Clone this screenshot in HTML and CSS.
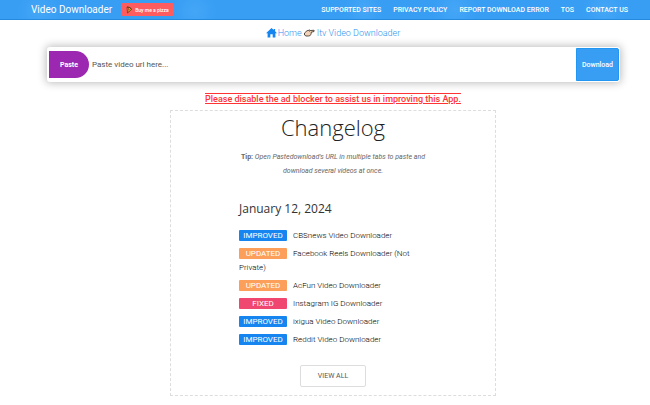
FILE: index.html
```html
<!DOCTYPE html>
<html lang="en">
<head>
<meta charset="utf-8">
<meta name="viewport" content="width=device-width, initial-scale=1">
<title>Itv Video Downloader</title>
<link rel="stylesheet" href="styles.css">
</head>
<body>
<header class="topbar">
  <a class="brand" href="#">Video Downloader</a>
  <a class="pizza" href="#">
    <svg class="pizza-icon" viewBox="0 0 12 14" aria-hidden="true">
      <path d="M2 1 Q10 1 11 6 L3 13 Z" fill="#e8a52c" stroke="#5d351d" stroke-width="1.5"/>
      <path d="M2 1 Q10 1 11 6" fill="none" stroke="#6b3b1c" stroke-width="2"/>
      <circle cx="5" cy="5" r="1.3" fill="#a92c1b"/>
      <circle cx="7.500" cy="6.500" r="1" fill="#4f7a2a"/>
      <circle cx="4.500" cy="9" r="1" fill="#a92c1b"/>
    </svg>
    <span>Buy me a pizza</span>
  </a>
  <nav class="menu">
    <a href="#">SUPPORTED SITES</a>
    <a href="#">PRIVACY POLICY</a>
    <a href="#">REPORT DOWNLOAD ERROR</a>
    <a href="#">TOS</a>
    <a href="#">CONTACT US</a>
  </nav>
</header>
<main class="page">
  <nav class="crumbs">
    <a class="home" href="#">
      <svg class="home-icon" viewBox="0 0 12 11" aria-hidden="true">
        <path d="M6 0 L8.500 2.300 V1 H10 V3.700 L12 5.800 H10.300 V10.500 H7.300 V7 H4.700 V10.500 H1.700 V5.800 H0 Z" fill="#1785f0"/>
      </svg>
      <span>Home</span>
    </a>
    <svg class="hand-icon" viewBox="0 0 22 16" aria-hidden="true">
      <path d="M1 8 L6 3.500 L10 2.500 Q12 1 13 3 L20 2.500 Q22 4 20 5 L14 6.500 Q16 8 14 9.500 Q15 11 12.500 12 Q12 14 9 14 L4 14 L1 12 Z" fill="#f3d3b8" stroke="#2e2925" stroke-width="1.600" stroke-linejoin="round"/>
      <path d="M13 3 L10 5" fill="none" stroke="#2e2925" stroke-width="1.200"/>
    </svg>
    <a href="#">Itv Video Downloader</a>
  </nav>
  <form class="search">
    <button class="paste" type="button">Paste</button>
    <input class="url" type="text" placeholder="Paste video url here..." aria-label="Video URL">
    <button class="download" type="button">Download</button>
  </form>
  <p class="notice">Please disable the ad blocker to assist us in improving this App.</p>
  <section class="changelog">
    <h1>Changelog</h1>
    <p class="tip"><b>Tip:</b> <i>Open Pastedownload's URL in multiple tabs to paste and download several videos at once.</i></p>
    <div class="release">
      <h2>January 12, 2024</h2>
      <ul>
        <li><span class="tag improved">IMPROVED</span>CBSnews Video Downloader</li>
        <li><span class="tag updated">UPDATED</span>Facebook Reels Downloader (Not Private)</li>
        <li><span class="tag updated">UPDATED</span>AcFun Video Downloader</li>
        <li><span class="tag fixed">FIXED</span>Instagram IG Downloader</li>
        <li><span class="tag improved">IMPROVED</span>ixigua Video Downloader</li>
        <li><span class="tag improved">IMPROVED</span>Reddit Video Downloader</li>
      </ul>
    </div>
    <button class="view-all" type="button">VIEW ALL</button>
  </section>
</main>
</body>
</html>
```
FILE: styles.css
```css
* {
  box-sizing: border-box;
}

body {
  margin: 0;
  background: #fff;
  color: #333;
  font-family: Roboto, "Liberation Sans", sans-serif;
  font-size: 8px;
}

a {
  color: inherit;
  text-decoration: none;
}

button {
  font-family: inherit;
  cursor: pointer;
}

.topbar {
  display: flex;
  align-items: center;
  height: 20px;
  padding: 0 22px 0 31px;
  border-bottom: 1px solid #238ade;
  color: #fff;
  background:
    radial-gradient(circle at 6% 60%, #45a6f6 0, transparent 22px),
    radial-gradient(circle at 30% 60%, #45a6f6 0, transparent 22px),
    radial-gradient(circle at 70% 50%, #45a6f6 0, transparent 22px),
    radial-gradient(circle at 56% 50%, #45a6f6 0, transparent 20px),
    radial-gradient(circle at 93% 50%, #45a6f6 0, transparent 22px),
    #379ef4;
}

.brand {
  font-size: 10px;
}

.pizza {
  display: flex;
  align-items: center;
  gap: 3px;
  height: 13px;
  margin-left: 9px;
  padding: 0 5px;
  border-radius: 2px;
  background: #ff5c60;
  font-size: 5px;
  font-weight: 500;
}

.pizza-icon {
  width: 6px;
  height: 8px;
}

.menu {
  display: flex;
  gap: 12px;
  margin-left: auto;
  font-size: 7px;
  font-weight: 500;
}

.page {
  display: flex;
  flex-direction: column;
  align-items: center;
  padding: 6px 0 8px 16px;
}

.crumbs {
  display: flex;
  align-items: center;
  gap: 2px;
  height: 14px;
  color: #2f94ec;
  font-size: 9px;
  font-weight: 300;
}

.home {
  display: flex;
  align-items: center;
  gap: 1px;
}

.home-icon {
  width: 11px;
  height: 10px;
}

.hand-icon {
  width: 11px;
  height: 8px;
}

.search {
  display: flex;
  align-items: center;
  align-self: stretch;
  height: 35px;
  margin: 7px 30px 0 31px;
  padding: 1px 1px 1px 2px;
  border-radius: 3px;
  background: #fff;
  box-shadow: 0 0 8px 1px #bbb;
}

.paste {
  width: 40px;
  height: 27px;
  padding: 0;
  border: 0;
  border-radius: 0 14px 14px 0;
  background: #9c27b0;
  color: #fff;
  font-size: 7px;
  font-weight: 700;
}

.url {
  flex: 1;
  min-width: 0;
  padding: 0 3px;
  border: 0;
  outline: 0;
  background: transparent;
  color: #444;
  font-family: inherit;
  font-size: 8px;
}

.url::placeholder {
  color: #555;
}

.download {
  align-self: stretch;
  width: 43px;
  padding: 0;
  border: 1px solid #2196f3;
  border-radius: 0 2px 2px 0;
  background: #379ef4;
  color: #fff;
  font-size: 7px;
  font-weight: 500;
}

.notice {
  margin: 11px 0 0;
  color: #f33;
  font-size: 9px;
  font-weight: 500;
  line-height: 12px;
  text-decoration: underline overline;
}

.changelog {
  display: flex;
  flex-direction: column;
  align-items: center;
  width: 51.5%;
  min-width: 240px;
  margin-top: 5px;
  padding: 0 16px 8px;
  border: 1px dashed #ddd;
}

h1 {
  margin: 0;
  color: #222;
  font-family: "Open Sans", sans-serif;
  font-size: 22px;
  font-weight: 300;
  line-height: 32px;
}

.tip {
  max-width: 200px;
  margin: 7px 0 0;
  color: #666;
  font-size: 7px;
  line-height: 14px;
  text-align: center;
}

.release {
  width: 188px;
  margin-top: 22px;
}

h2 {
  margin: 0;
  font-family: "Open Sans", sans-serif;
  font-size: 12px;
  font-weight: 400;
  line-height: 18px;
}

ul {
  display: flex;
  flex-direction: column;
  gap: 4px;
  margin: 11px 0 0;
  padding: 0;
  list-style: none;
  line-height: 14px;
  font-weight: 300;
  color: #000;
}

.tag {
  display: inline-block;
  width: 48px;
  height: 11px;
  margin-right: 6px;
  border-radius: 1px;
  color: #fff;
  font-weight: 400;
  line-height: 11px;
  text-align: center;
}

.improved {
  background: #1785f0;
}

.updated {
  background: #fc9f5b;
}

.fixed {
  background: #ef476f;
}

.view-all {
  width: 66px;
  height: 22px;
  margin-top: 18px;
  padding: 0;
  border: 1px solid #ddd;
  border-radius: 2px;
  background: #fff;
  color: #555;
  font-size: 7px;
}
```
